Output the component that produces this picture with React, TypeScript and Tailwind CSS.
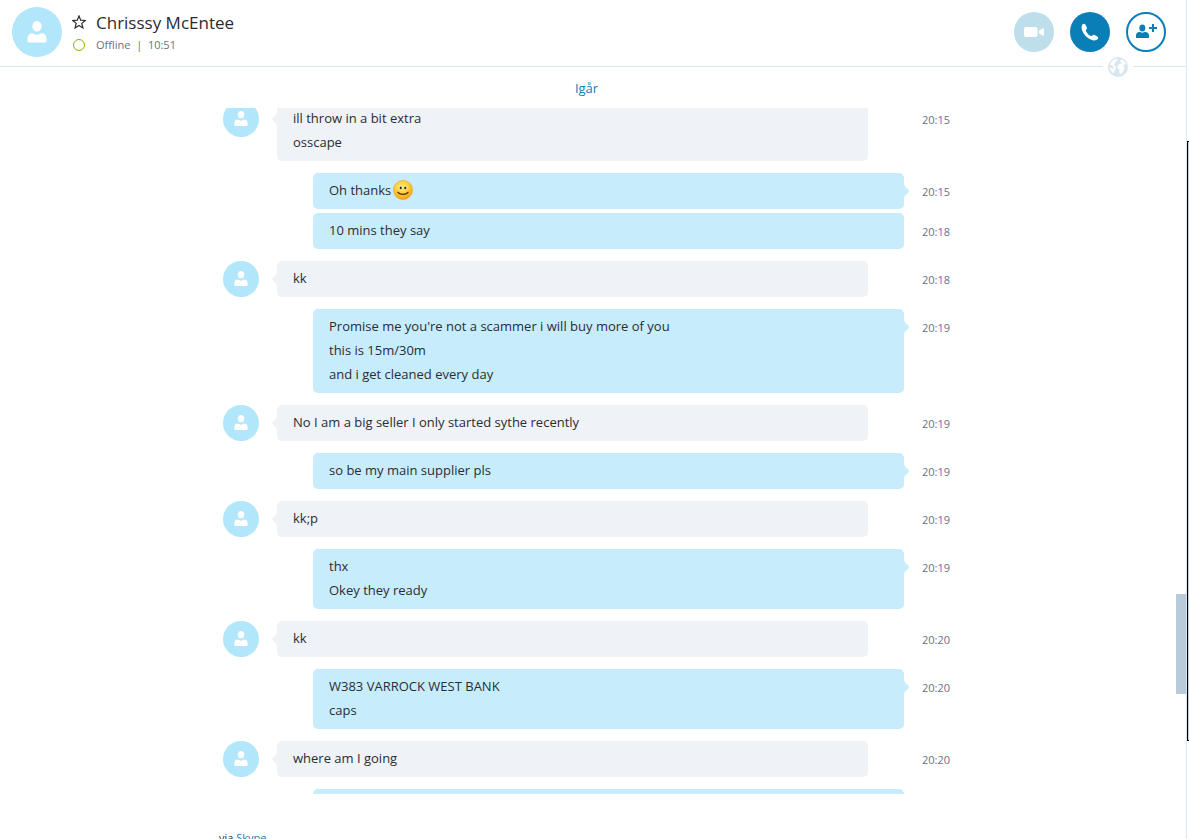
import { clsx } from "clsx";

type Message = {
  from: "me" | "them";
  lines: string[];
  time: string;
  smile?: boolean;
  grouped?: boolean;
};

const MESSAGES: Message[] = [
  { from: "them", lines: ["ill throw in a bit extra", "osscape"], time: "20:15" },
  { from: "me", lines: ["Oh thanks"], time: "20:15", smile: true },
  { from: "me", lines: ["10 mins they say"], time: "20:18", grouped: true },
  { from: "them", lines: ["kk"], time: "20:18" },
  {
    from: "me",
    lines: [
      "Promise me you're not a scammer i will buy more of you",
      "this is 15m/30m",
      "and i get cleaned every day",
    ],
    time: "20:19",
  },
  { from: "them", lines: ["No I am a big seller I only started sythe recently"], time: "20:19" },
  { from: "me", lines: ["so be my main supplier pls"], time: "20:19" },
  { from: "them", lines: ["kk;p"], time: "20:19" },
  { from: "me", lines: ["thx", "Okey they ready"], time: "20:19" },
  { from: "them", lines: ["kk"], time: "20:20" },
  { from: "me", lines: ["W383 VARROCK WEST BANK", "caps"], time: "20:20" },
  { from: "them", lines: ["where am I going"], time: "20:20" },
  { from: "me", lines: [""], time: "" },
];

function Avatar({ large }: { large?: boolean }) {
  return (
    <span
      className={clsx(
        "flex shrink-0 items-center justify-center rounded-full bg-[#b2e6fa]",
        large ? "size-[50px]" : "size-9"
      )}
    >
      <svg viewBox="0 0 20 22" fill="#fff" className={large ? "w-5" : "w-[14px]"} aria-hidden="true">
        <ellipse cx="10" cy="5.2" rx="4.6" ry="5.2" />
        <path d="M.5 20.500v-2.500c0-3.400 1.800-5.700 4.700-5.700 1.300 0 2.600 1.500 4.800 1.500s3.500-1.500 4.800-1.500c2.900 0 4.700 2.300 4.700 5.700v2.500c0 .6-.4 1-1 1h-17c-.6 0-1-.4-1-1z" />
      </svg>
    </span>
  );
}

function Smile() {
  return (
    <svg viewBox="0 0 20 20" className="ml-0.5 inline-block size-5 align-[-5px]" role="img" aria-label="smile">
      <defs>
        <radialGradient id="face" cx="45%" cy="35%" r="70%">
          <stop offset="0" stopColor="#ffec75" />
          <stop offset=".55" stopColor="#fdcb2f" />
          <stop offset="1" stopColor="#f09418" />
        </radialGradient>
      </defs>
      <circle cx="10" cy="10" r="9.600" fill="url(#face)" stroke="#f0a030" strokeWidth=".6" />
      <ellipse cx="7.500" cy="7.600" rx="1.800" ry="2" fill="#fff6cf" />
      <ellipse cx="12.500" cy="7.600" rx="1.800" ry="2" fill="#fff6cf" />
      <ellipse cx="7.700" cy="7.900" rx="1.100" ry="1.400" fill="#3c2a12" />
      <ellipse cx="12.300" cy="7.900" rx="1.100" ry="1.400" fill="#3c2a12" />
      <path d="M5 12.300c2 2.700 8 2.700 10 0" fill="none" stroke="#4a2c08" strokeWidth="1.400" strokeLinecap="round" />
    </svg>
  );
}

function Tail({ mine }: { mine: boolean }) {
  return (
    <svg
      viewBox="0 0 5 16"
      className={clsx(
        "absolute top-[10px] h-4 w-[5px]",
        mine ? "left-full fill-[#c7ecfc]" : "right-full -scale-x-100 fill-[#eff2f7]"
      )}
      aria-hidden="true"
    >
      <path d="M0 0c0 3 1.500 4 3.500 5.800C5.300 7.400 5.300 8.600 3.500 10.200 1.500 12 0 13 0 16z" />
    </svg>
  );
}

function MessageRow({ message }: { message: Message }) {
  const mine = message.from === "me";
  return (
    <li
      className={clsx(
        "grid grid-cols-[36px_1fr_41px] gap-x-[18px]",
        message.grouped ? "mt-1" : "mt-3"
      )}
    >
      <div>{!mine && <Avatar />}</div>
      <div
        className={clsx(
          "relative min-h-9 rounded-[5px] px-4 pb-[7px] pt-[5px] text-[13px] leading-6",
          mine ? "ml-9 bg-[#c7ecfc]" : "mr-9 bg-[#eff2f7]"
        )}
      >
        {!message.grouped && <Tail mine={mine} />}
        {message.lines.map((line) => (
          <p key={line}>
            {line}
            {message.smile && <Smile />}
          </p>
        ))}
      </div>
      <time className="pt-[10px] text-[11px] leading-[18px] text-[#66728a]">{message.time}</time>
    </li>
  );
}

function Header() {
  return (
    <header className="relative z-20 flex h-[67px] shrink-0 justify-between border-b border-[#d8e6f0] pl-3 pr-5">
      <div className="flex pt-[7px]">
        <Avatar large />
        <div className="ml-[10px]">
          <div className="flex h-[30px] items-center">
            <button type="button" aria-label="Favourite">
              <svg viewBox="0 0 14 14" className="size-[14px]" fill="none" stroke="#2b2c33" strokeWidth="1.200">
                <path d="M7 .9l1.700 4.300 4.600.3-3.500 2.900 1.100 4.500L7 10.400l-3.900 2.500 1.100-4.500L.7 5.500l4.600-.3z" />
              </svg>
            </button>
            <h1 className="ml-[10px] pt-px text-[17px] leading-6">Chrisssy McEntee</h1>
          </div>
          <div className="flex h-[15px] items-center">
            <span className="ml-px size-3 rounded-full border border-[#7fba00]" />
            <p className="ml-[11px] text-[11px] leading-[15px] text-[#66728a]">Offline&nbsp; | &nbsp;10:51</p>
          </div>
        </div>
      </div>
      <div className="flex gap-4 pt-3">
        <button
          type="button"
          disabled
          aria-label="Video call"
          className="flex size-10 items-center justify-center rounded-full bg-[#bfdeec]"
        >
          <svg viewBox="0 0 20 10" className="h-[10px] w-5" fill="#fff">
            <rect width="13.500" height="10" rx="2" />
            <path d="M15 3.800l3.500-2.300c.8-.5 1.500-.3 1.500.5v6c0 .8-.7 1-1.500.5L15 6.200z" />
          </svg>
        </button>
        <button
          type="button"
          aria-label="Call"
          className="flex size-10 items-center justify-center rounded-full bg-[#0a7eb7]"
        >
          <svg viewBox="0 0 18 18" className="size-[18px]" fill="#fff">
            <path d="M1.200 1.700C2 .5 3.600.200 4.300 1.400l1.500 2.800c.4.900.2 1.500-.5 2.200-.6.6-.6 1.200-.1 2.100.9 1.700 2.400 3.300 4.200 4.300.8.400 1.400.3 2-.3.7-.7 1.400-.8 2.200-.4l2.800 1.400c1.200.7 1.100 2.200-.1 3.100-1.700 1.200-4.200 1-6.700-.1-3.600-1.600-6.500-4.600-8-8C.5 6 .200 3.300 1.200 1.700z" />
          </svg>
        </button>
        <button
          type="button"
          aria-label="Add people"
          className="flex size-10 items-center justify-center rounded-full border-2 border-[#0a7eb7]"
        >
          <svg viewBox="0 0 21 14" className="mb-0.5 h-[14px] w-[21px]" fill="#0a7eb7">
            <ellipse cx="6.300" cy="4" rx="3" ry="3.500" />
            <path d="M0 14v-2.500C0 9.500 1.300 8 3.300 8c1 0 1.700.7 3 .7s2-.7 3-.7c2 0 3.700 1.500 3.700 3.500V14zM16 0h2v3h3v2h-3v3h-2V5h-3V3h3z" />
          </svg>
        </button>
      </div>
      <span className="absolute -bottom-[11px] right-[53px] bg-white px-[5px]">
        <svg viewBox="0 0 20 20" className="block size-5" aria-hidden="true">
          <circle cx="10" cy="10" r="10" fill="#d8e6f0" />
          <path
            fill="#fff"
            d="M8.500 1.500c1 .3 1.500 1 .8 2L7.500 5.200 6 7.500l.8 1.200 1.200.8-.3 2.500-1.200 1.800-.5 2.500c-2.200-1.200-4-3.200-4.300-5.800 1.300-.2 2.300.5 3.100 1.200L5.500 10 4.200 8.500 1.800 8C2.600 4.500 5.300 2 8.500 1.500zM13 2.200c2.700.8 4.600 3 5.300 5.600l-1.800-.6-1.200 1.300 1.200 1.800-.8 3.200-2.200 3.300-1.700.5-.6-2.700.4-2-2-1.200-.4-2.200 1.600-2 2.200-.2.700-1.600-1.500-1z"
          />
        </svg>
      </span>
    </header>
  );
}

export default function App() {
  return (
    <div className="flex h-screen overflow-hidden bg-white font-['Open_Sans','Noto_Sans',sans-serif] text-[#2b2c33]">
      <div className="flex min-w-0 flex-1 flex-col border-r border-[#d8e6f0]">
        <Header />
        <main className="relative min-h-0 flex-1 overflow-hidden">
          <div className="absolute inset-x-0 top-0 z-10 h-[41px] bg-white/95">
            <p className="mx-auto max-w-[740px] pr-[13px] pt-[9px] text-center text-[13px] leading-6 text-[#0a7eb7]">
              Igår
            </p>
          </div>
          <ul className="mx-auto max-w-[740px] pt-[22px]">
            {MESSAGES.map((message, i) => (
              <MessageRow key={i} message={message} />
            ))}
          </ul>
          <div className="absolute right-0 top-[527px] h-[100px] w-[10px] bg-[#b8cbda]" />
        </main>
        <footer className="h-[45px] shrink-0 overflow-hidden">
          <p className="mx-auto max-w-[748px] pt-[35px] text-[11px] leading-[18px]">
            via{" "}
            <a href="#" className="text-[#0a7eb7]">
              Skype
            </a>
          </p>
        </footer>
      </div>
      <div className="w-[2px] pt-[141px]">
        <div className="h-[600px] border-y border-l border-black bg-[#c9d3d6]" />
      </div>
    </div>
  );
}
